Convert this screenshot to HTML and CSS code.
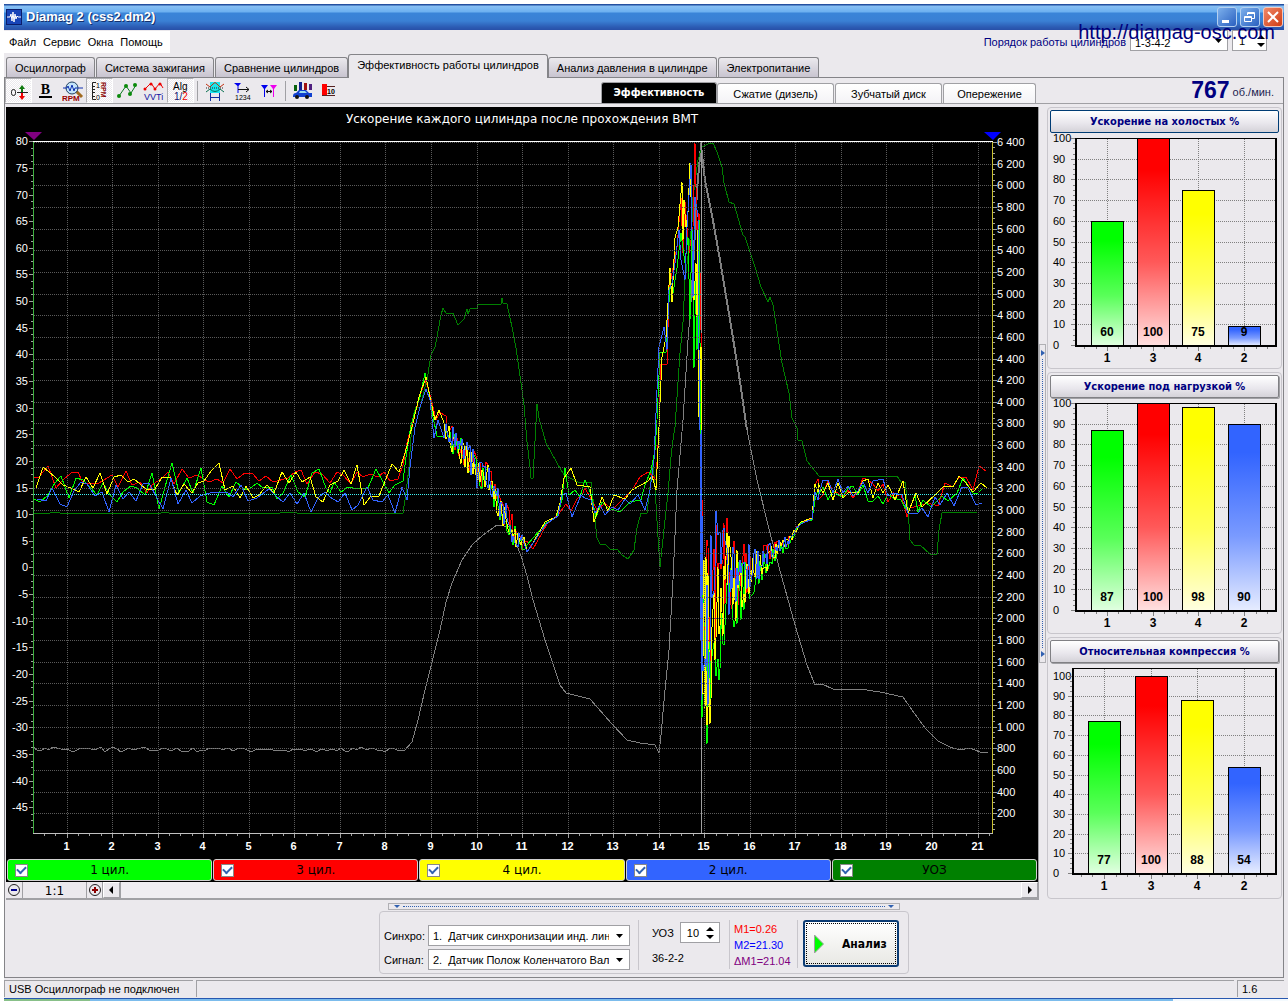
FILE: index.html
```html
<!DOCTYPE html>
<html lang="ru">
<head>
<meta charset="utf-8">
<title>Diamag 2 (css2.dm2)</title>
<link rel="stylesheet" href="styles.css">
</head>
<body>
<div class="window">
  <header class="titlebar">
    <svg class="app-icon" width="16" height="16" viewBox="0 0 16 16"><rect width="16" height="16" fill="#0b1d6b"/><rect x="1" y="1" width="14" height="14" fill="#1845b8"/><path d="M1 8h3l1-3 1 7 1-9 1 10 1-8 1 5 1-3 1 1h3" fill="none" stroke="#fff"/></svg>
    <h1>Diamag 2 (css2.dm2)</h1>
    <div class="window-buttons">
      <button aria-label="Свернуть"><svg width="18" height="18" viewBox="0 0 18 18"><path d="M4 12h7v3H4z" fill="#fff"/></svg></button>
      <button aria-label="Восстановить"><svg width="18" height="18" viewBox="0 0 18 18"><path d="M6.500 7V4.500h7v6H11M6 5.500h8M3.500 8.500h7v5h-7zM3 9.500h8" fill="none" stroke="#fff"/></svg></button>
      <button class="close" aria-label="Закрыть"><svg width="18" height="18" viewBox="0 0 18 18"><path d="M4 4l10 10M14 4L4 14" stroke="#fff" stroke-width="2"/></svg></button>
    </div>
  </header>
  <a class="site-link" href="#site">http://diamag-osc.com</a>

  <div class="menu-row">
    <nav class="menu"><a href="#file">Файл</a><a href="#service">Сервис</a><a href="#windows">Окна</a><a href="#help">Помощь</a></nav>
    <div class="firing-order">
      <label for="order">Порядок работы цилиндров</label>
      <div class="select order"><select id="order"><option>1-3-4-2</option></select><svg width="7" height="4" viewBox="0 0 7 4"><path d="M0 0h7L3.500 4z"/></svg></div>
      <div class="spin small"><input id="first" type="text" value="1" aria-label="Первый цилиндр"><svg width="8" height="12" viewBox="0 0 8 12"><path d="M0 4l4-4 4 4zM0 8l4 4 4-4z"/></svg></div>
    </div>
  </div>

  <div class="tabs">
    <button>Осциллограф</button><button>Система зажигания</button><button>Сравнение цилиндров</button><button class="active">Эффективность работы цилиндров</button><button>Анализ давления в цилиндре</button><button>Электропитание</button>
  </div>

  <main class="page">
    <div class="toolbar">
      <div class="tools">
        <button class="on" aria-label="Ноль"><svg width="20" height="20" viewBox="0 0 20 20"><rect x="2.500" y="8.500" width="4" height="6" rx="2" fill="none" stroke="#222"/><path d="M8 11.500h11" stroke="#222"/><path d="M13 4l3 4h-2v3h-2V8h-2z" fill="#107a10"/><path d="M13 19l3-4h-2v-3h-2v3h-2z" fill="#e00"/></svg></button>
        <button aria-label="Жирный"><b class="glyph-b">B</b></button>
        <button aria-label="Обороты"><svg width="22" height="22" viewBox="0 0 22 22"><path d="M14 11l6 6" stroke="#a06a20" stroke-width="3"/><circle cx="10" cy="8" r="6" fill="#c4e4fa" stroke="#204060"/><path d="M1 8h4l1-2 2 5 2-6 2 6 1-3h8" fill="none" stroke="#1030b0"/><text x="0" y="21" class="t-red">RPM</text></svg></button>
        <button class="on" aria-label="Шкала оборотов"><svg width="20" height="20" viewBox="0 0 20 20"><path d="M6 1.500H2.500v17H6M3 5.500h2M3 8.500h2M3 11.500h2M3 15.500h2" fill="none" stroke="#222"/><text x="6" y="7" class="t-tiny">1</text><text x="6" y="19" class="t-tiny">0</text><text class="t-tiny t-brown" transform="translate(11 1) rotate(90)">RPM</text></svg></button>
        <button aria-label="Точки"><svg width="22" height="20" viewBox="0 0 22 20"><path d="M3 15L10 5l5 7 5-8" fill="none" stroke="#0b7a20"/><g fill="#0a8a0a"><circle cx="3" cy="15" r="2"/><circle cx="10" cy="5" r="2"/><circle cx="14" cy="13" r="2"/><circle cx="19" cy="4" r="2"/></g></svg></button>
        <button aria-label="VVTi"><svg width="22" height="20" viewBox="0 0 22 20"><path d="M2 8l6-6 4 6 5-6 3 5" fill="none" stroke="#e00"/><g fill="#e00"><circle cx="2" cy="8" r="1.500"/><circle cx="8" cy="3" r="1.500"/><circle cx="12" cy="8" r="1.500"/><circle cx="17" cy="3" r="1.500"/></g><text x="1" y="19" class="t-blue">VVTi</text></svg></button>
        <button class="on" aria-label="Алгоритм"><svg width="20" height="22" viewBox="0 0 20 22"><text x="2" y="10" class="t-alg">Alg</text><text x="3" y="20" class="t-half"><tspan fill="#101070">1/</tspan><tspan fill="#e00">2</tspan></text></svg></button>
        <i class="sep"></i>
        <button aria-label="Интервал"><svg width="20" height="20" viewBox="0 0 20 20"><path d="M5 1h10v11H5z" fill="#19e6ee"/><path d="M1 3l4 3 3-3q2-3 4 0l3 3 4-3" fill="none" stroke="#c03010"/><path d="M1 11l4-3q5 5 10 0l4 3" fill="none" stroke="#087050"/><path d="M1 7h18" stroke="#222" stroke-dasharray="1 1"/><path d="M5.500 12v8M14.500 12v8M6 16.500h8" stroke="#1030a0"/></svg></button>
        <button aria-label="Маркер 1234"><svg width="20" height="20" viewBox="0 0 20 20"><path d="M2 2h7L6.500 5v7h-1V5z" fill="#00e"/><path d="M6 8.500h11M14 6l3 2.500L14 11" fill="none" stroke="#111"/><text x="3" y="19" class="t-tiny">1234</text></svg></button>
        <button aria-label="Маркеры"><svg width="20" height="20" viewBox="0 0 20 20"><path d="M2 4h7L6 8v8H5V8z" fill="#00e"/><path d="M11 4h7l-3 4v8h-1V8z" fill="#e0e"/><path d="M7 10.500h6M9 9l-2 1.500L9 12M11 9l2 1.500L11 12" fill="none" stroke="#111"/></svg></button>
        <i class="sep"></i>
        <button aria-label="Отчёт по авто"><svg width="22" height="20" viewBox="0 0 22 20"><path d="M2 4h3v6H2z" fill="#08620e"/><path d="M7 1h3v8H7z" fill="#102090"/><path d="M12 2h3v7h-3z" fill="#a01010"/><path d="M17 3h3v6h-3z" fill="#502080"/><path d="M1 15q0-3 3-3l3-3h7l3 3h3v4H1z" fill="#1040d0"/><path d="M7 12l1-2h5l2 2z" fill="#9de"/><circle cx="5" cy="16" r="2" fill="#111"/><circle cx="15" cy="16" r="2" fill="#111"/></svg></button>
        <button aria-label="Столбцы"><svg width="20" height="20" viewBox="0 0 20 20"><path d="M2 3h5v12H2z" fill="#f00"/><path d="M7 5.500h8M2 14.500h13" stroke="#522"/><text x="7" y="13" class="t-tiny t-bold">10</text></svg></button>
      </div>
      <div class="subtabs">
        <button class="active">Эффективность</button><button>Сжатие (дизель)</button><button>Зубчатый диск</button><button>Опережение</button>
      </div>
      <p class="rpm"><b>767</b> об./мин.</p>
    </div>

    <div class="work">
      <section class="plot">
        <svg id="traces" class="traces" viewBox="6 107 1032 751" role="img" aria-label="Ускорение каждого цилиндра после прохождения ВМТ"></svg>
        <div class="legend">
          <label class="green"><input type="checkbox" checked><span>1 цил.</span></label>
          <label class="red"><input type="checkbox" checked><span>3 цил.</span></label>
          <label class="yellow"><input type="checkbox" checked><span>4 цил.</span></label>
          <label class="blue"><input type="checkbox" checked><span>2 цил.</span></label>
          <label class="dark"><input type="checkbox" checked><span>УОЗ</span></label>
        </div>
        <div class="scroll-row">
          <button aria-label="Уменьшить"><svg width="14" height="14" viewBox="0 0 14 14"><circle cx="7" cy="7" r="5.500" fill="none" stroke="#222"/><path d="M4 7h6" stroke="#00008b" stroke-width="2"/></svg></button>
          <output>1:1</output>
          <button aria-label="Увеличить"><svg width="14" height="14" viewBox="0 0 14 14"><circle cx="7" cy="7" r="5.500" fill="none" stroke="#222"/><path d="M4 7h6M7 4v6" stroke="#8b0000" stroke-width="2"/></svg></button>
          <button class="raised" aria-label="Влево"><svg width="5" height="8" viewBox="0 0 5 8"><path d="M4 0v8L0 4z"/></svg></button>
          <div class="track"></div>
          <button class="raised" aria-label="Вправо"><svg width="5" height="8" viewBox="0 0 5 8"><path d="M1 0v8l4-4z"/></svg></button>
        </div>
      </section>

      <div class="vsplit"><button aria-label="Свернуть панель"><svg width="4" height="6" viewBox="0 0 4 6"><path d="M0 0v6l4-3z"/></svg><i></i><svg width="4" height="6" viewBox="0 0 4 6"><path d="M0 0v6l4-3z"/></svg></button></div>

      <aside class="bars">
        <section class="card"><button class="focused">Ускорение на холостых %</button><svg class="barchart" viewBox="0 0 229 232" data-values="60,100,75,9"></svg></section>
        <section class="card"><button>Ускорение под нагрузкой %</button><svg class="barchart" viewBox="0 0 229 232" data-values="87,100,98,90"></svg></section>
        <section class="card"><button>Относительная компрессия %</button><svg class="barchart" viewBox="0 0 229 232" data-values="77,100,88,54" data-headroom="8"></svg></section>
      </aside>
    </div>

    <div class="bottom">
      <div class="hsplit"><svg width="6" height="3" viewBox="0 0 6 3"><path d="M0 0h6L3 3z"/></svg><i></i><svg width="6" height="3" viewBox="0 0 6 3"><path d="M0 0h6L3 3z"/></svg></div>
      <form class="controls">
        <div class="sources">
          <label for="sync">Синхро:</label>
          <div class="select"><select id="sync"><option>1.&nbsp; Датчик синхронизации инд. линейный</option></select><svg width="7" height="4" viewBox="0 0 7 4"><path d="M0 0h7L3.500 4z"/></svg></div>
          <label for="signal">Сигнал:</label>
          <div class="select"><select id="signal"><option>2.&nbsp; Датчик Полож Коленчатого Вала</option></select><svg width="7" height="4" viewBox="0 0 7 4"><path d="M0 0h7L3.500 4z"/></svg></div>
        </div>
        <div class="advance">
          <div class="advance-row"><label for="uoz">УОЗ</label><div class="spin"><input id="uoz" type="text" value="10"><svg width="8" height="12" viewBox="0 0 8 12"><path d="M0 4l4-4 4 4zM0 8l4 4 4-4z"/></svg></div></div>
          <span>36-2-2</span>
        </div>
        <div class="marks"><span class="m1">M1=0.26</span><span class="m2">M2=21.30</span><span class="dm">ΔM1=21.04</span></div>
        <button type="button" class="analyse"><svg width="10" height="20" viewBox="0 0 10 20"><path d="M.500 1v18l9-9z" fill="#0f0" stroke="#a0a0a0"/></svg><span>Анализ</span></button>
      </form>
    </div>
  </main>

  <footer class="status"><span class="device">USB Осциллограф не подключен</span><span class="message"></span><span class="version">1.6</span></footer>
</div>
<div class="taskbar"><i></i></div>
<script src="charts.js"></script>
</body>
</html>
```
FILE: styles.css
```css
* { box-sizing: border-box; }
body { margin: 0; padding: 4px 0 0 4px; background: #fff; font: 11px/14px "Liberation Sans", Arial, sans-serif; color: #000; }
button, input, select { font: inherit; color: inherit; margin: 0; padding: 0; border: 0; background: none; border-radius: 0; }
a { color: inherit; text-decoration: none; }
h1, p { margin: 0; }
svg { display: block; flex: none; }
.window { position: relative; background: #ebe9ed; }
.titlebar { display: flex; align-items: center; height: 26px; padding: 0 1px 0 2px; gap: 4px; background: linear-gradient(#2450a0 0 1px, #88c0f4 2px, #6cb0f0 8px, #3a84d8 9px, #3a80d4 17px, #2c5cb4 23px, #2850a8); margin-right: 4px; }
.titlebar h1 { flex: 1; font: bold 13px/16px "Liberation Sans", sans-serif; color: #fff; text-shadow: 1px 1px #14306c; }
.window-buttons { display: flex; gap: 3px; }
.window-buttons button { display: grid; place-items: center; width: 20px; height: 20px; border: 1px solid #b4d0f0; border-radius: 3px; background: linear-gradient(135deg, #7cb0ec, #2a60c0); }
.window-buttons .close { background: linear-gradient(135deg, #f08868, #d03c14); border-color: #f4c8bc; }
.site-link { position: absolute; right: 13px; top: 17px; z-index: 2; font: 20px/22px "Liberation Sans", sans-serif; color: #00007c; }
.menu-row { display: flex; justify-content: space-between; height: 24px; }
.menu { display: flex; gap: 7px; align-items: center; width: 166px; height: 22px; margin-top: 1px; padding-left: 5px; background: #fff; }
.firing-order { display: flex; gap: 4px; color: #000080; line-height: 24px; padding-right: 21px; }
.select { position: relative; display: flex; align-items: center; width: 202px; height: 21px; border: 1px solid #a0a0a4; background: #fff; }
.select select { width: 180px; height: 19px; padding-left: 4px; appearance: none; outline: 0; overflow: hidden; color: #000; }
.select svg { margin-left: 7px; }
.order { width: 98px; }
.order select { width: 78px; }
.order svg { margin-left: 6px; }
.spin { display: flex; align-items: center; justify-content: space-between; width: 40px; height: 21px; padding-right: 5px; border: 1px solid #a0a0a4; background: #fff; color: #000; }
.spin input { width: 24px; padding-left: 6px; }
.spin.small { width: 35px; }
.tabs { display: flex; align-items: flex-end; height: 23px; padding-left: 2px; }
.tabs button { height: 20px; padding: 0 8px; margin-right: 1px; border: 1px solid #848488; border-bottom: 0; border-radius: 3px 3px 0 0; background: linear-gradient(#ebe9ed, #c8c4d0); white-space: nowrap; }
.tabs .active { position: relative; z-index: 1; height: 24px; margin: 0 0 -1px -1px; padding-bottom: 3px; background: #ebe9ed; }
.page { margin-right: 4px; border: 1px solid #848488; }
.toolbar { display: flex; height: 26px; border-bottom: 1px solid #a0a0a4; }
.tools { display: flex; flex: 1; }
.tools button { display: grid; place-items: center; width: 27px; height: 25px; }
.tools .on { background: repeating-conic-gradient(#fff 0 25%, #ebe9ed 0 50%) 0 0 / 2px 2px; border: 1px solid; border-color: #b0b0b4 #fff #fff #b0b0b4; }
.sep { width: 1px; margin: 3px 3px 2px; background: #a0a0a4; }
.glyph-b { font: bold 14px/13px "Liberation Serif", serif; border-bottom: 2px solid; width: 13px; }
.tools text { font-family: "Liberation Sans", sans-serif; }
.t-red { font-size: 8px; font-weight: bold; fill: #900; }
.t-tiny { font-size: 7px; }
.t-brown { fill: #800; font-weight: bold; }
.t-bold { font-weight: bold; }
.t-blue { font-size: 9px; fill: #1010a0; }
.t-alg { font-size: 10px; }
.t-half { font-size: 10px; }
.subtabs { display: flex; align-items: flex-end; }
.subtabs button { width: 107px; height: 20px; margin-left: 1px; border: 1px solid #a0a0a4; border-bottom: 0; border-radius: 3px 3px 0 0; background: linear-gradient(#fff, #f4f3f6); }
.subtabs button:nth-child(2) { width: 117px; margin-left: 0; }
.subtabs .active { width: 116px; height: 21px; background: #000; color: #fff; font-weight: bold; font-family: "DejaVu Sans Condensed", sans-serif; }
.subtabs button:last-child { width: 93px; }
.rpm { width: 247px; padding-right: 9px; text-align: right; color: #1c1c50; line-height: 26px; }
.rpm b { font: bold 23px/24px "Liberation Sans", sans-serif; color: #000080; vertical-align: -2px; }
.work { display: flex; padding: 3px 0 0 1px; }
.plot { flex: 1; min-width: 0; background: #000; border-right: 1px solid #a0a0a4; }
.traces { width: 100%; height: auto; }
.traces text, .barchart text { font-family: "Liberation Sans", sans-serif; font-size: 11px; }
.traces text { fill: #fff; }
.traces .title { font: 12px "DejaVu Sans", sans-serif; }
.traces .x, .barchart .x { font-weight: bold; }
.barchart .x { font-size: 12px; }
.barchart .v { font-size: 12px; font-weight: bold; }
.grid { fill: none; stroke: #5a5a5a; stroke-dasharray: 1 1; shape-rendering: crispEdges; }
.crisp { shape-rendering: crispEdges; fill: none; }
.trace { fill: none; stroke-width: 1; shape-rendering: crispEdges; }
.trace.wide { stroke-width: 2; }
.legend { display: flex; gap: 1px; padding: 1px; }
.legend label { flex: 1; display: flex; align-items: center; height: 22px; padding-left: 7px; border: 1px solid #d0d0d0; border-radius: 3px; font: 12px/20px "DejaVu Sans", sans-serif; }
.legend span { flex: 1; text-align: center; padding-right: 20px; }
.legend input { appearance: none; width: 13px; height: 13px; border: 1px solid #888; background: #fff; display: grid; place-items: center; }
.legend input:checked::before { content: ""; width: 7px; height: 4px; border: solid #3060b0; border-width: 0 0 2px 2px; transform: translateY(-1px) rotate(-45deg); }
.green { background: #0f0; }
.red { background: #f00; }
.yellow { background: #ff0; }
.blue { background: #3264ff; }
.dark { background: #008000; }
.scroll-row { display: flex; height: 18px; background: #ebe9ed; border-bottom: 2px solid #a0a0a4; }
.scroll-row button { display: grid; place-items: center; width: 17px; border-right: 1px solid #a0a0a4; }
.scroll-row output { width: 63px; text-align: center; font: 12px/19px "DejaVu Sans", sans-serif; }
.scroll-row button:nth-of-type(2) { border-left: 1px solid #a0a0a4; }
.scroll-row .raised { border: 1px solid; border-color: #fff #a0a0a4 #a0a0a4 #fff; }
.track { flex: 1; border-left: 1px solid #a0a0a4; background: #efedf1; }
.vsplit { display: flex; align-items: center; width: 8px; }
.vsplit button { display: flex; flex-direction: column; align-items: center; gap: 3px; width: 7px; height: 319px; padding: 5px 0; border: 1px solid #b0b0b4; }
.vsplit i { flex: 1; border-left: 1px dotted #3060b0; }
.vsplit svg, .hsplit svg { fill: #3060b0; }
.bars { display: flex; flex-direction: column; gap: 3px; width: 236px; padding: 0 1px 0 0; }
.card { height: 262px; padding: 2px; border: 1px solid #c8c6cc; border-radius: 4px; }
.card button { display: block; width: 100%; height: 23px; border: 1px solid #808084; border-radius: 2px; background: linear-gradient(#fff, #e8e6ec 60%, #d4d2d8); color: #000080; font-weight: bold; font-family: "DejaVu Sans Condensed", sans-serif; box-shadow: 1px 1px #a0a0a4; }
.card .focused { border-color: #003c74; box-shadow: none; }
.barchart { width: 100%; height: auto; margin-top: 1px; overflow: visible; }
.bottom { display: flex; flex-direction: column; align-items: center; gap: 1px; height: 77px; padding-top: 3px; }
.hsplit { display: flex; align-items: center; gap: 3px; width: 512px; height: 7px; padding: 0 5px; border: 1px solid #b0b0b4; }
.hsplit i { flex: 1; border-top: 1px dotted #3060b0; }
.controls { display: flex; align-items: flex-start; width: 530px; height: 63px; padding: 8px 0 0 4px; border: 1px solid #c8c6cc; border-radius: 4px; }
.sources { display: grid; grid-template-columns: 44px 202px; gap: 3px 0; align-items: center; padding: 5px 8px 0 0; border-right: 1px solid #c8c6cc; }
.advance { display: flex; flex-direction: column; gap: 8px; width: 91px; height: 49px; padding: 2px 0 0 13px; border-right: 1px solid #c8c6cc; }
.advance-row { display: flex; align-items: center; gap: 6px; }
.marks { display: flex; flex-direction: column; gap: 2px; width: 68px; height: 48px; margin-right: 5px; padding: 2px 0 0 4px; border-right: 1px solid #c8c6cc; white-space: nowrap; }
.m1 { color: #f00; }
.m2 { color: #00f; }
.dm { color: #800080; }
.analyse { display: flex; align-items: center; width: 96px; height: 47px; padding: 0 9px; gap: 18px; border: 2px solid #0c3c74; border-radius: 3px; background: linear-gradient(#fff, #e8e8e4); font: bold 12px/14px "DejaVu Sans Condensed", sans-serif; outline: 1px dotted #000; outline-offset: -4px; }
.status { display: flex; gap: 3px; height: 20px; padding-top: 2px; margin-right: 4px; }
.status span { height: 17px; padding-left: 4px; border: solid #a0a0a4; border-width: 1px 0 0 1px; line-height: 16px; }
.device { width: 189px; }
.message { flex: 1; }
.version { width: 47px; }
.taskbar { height: 3px; border-top: 1px solid #2858b0; background: linear-gradient(90deg, #7cbcec 1169px, #f4fafe 1169px); }
.taskbar i { display: block; width: 86px; height: 2px; background: #88c088; }
```
FILE: charts.js
```js
const NS = 'http://www.w3.org/2000/svg';

function add(parent, tag, attrs, text) {
  const el = document.createElementNS(NS, tag);
  for (const k in attrs) el.setAttribute(k, attrs[k]);
  if (text !== undefined) el.textContent = text;
  parent.appendChild(el);
  return el;
}

// Small repeatable generator so that the noisy parts look the same on every load.
function noise(seed) {
  let s = seed;
  return () => (s = (s * 16807) % 2147483647) / 2147483647;
}

function interpolate(table, x) {
  for (let i = 1; i < table.length; i++) {
    if (x <= table[i][0]) {
      const a = table[i - 1], b = table[i], t = (x - a[0]) / (b[0] - a[0]);
      return a.map((v, k) => v + (b[k] - v) * t);
    }
  }
  return table[table.length - 1];
}

// Fills a stretch with points between an upper and a lower bound.
function burst(bounds, step, bias, seed) {
  const r = noise(seed * 7919), out = [];
  const end = bounds[bounds.length - 1][0];
  r();
  for (let x = bounds[0][0] + (seed % 3); x < end; x += step) {
    const [, top, low] = interpolate(bounds, x);
    const t = Math.min(1, Math.max(0, r() + bias));
    out.push(Math.round(x) + ',' + Math.round(top + (low - top) * t));
  }
  return out.join(' ');
}

const decay = [[442, 410, 436], [450, 424, 450], [460, 434, 464], [470, 445, 475], [478, 456, 492], [488, 464, 490], [494, 480, 508], [499, 490, 526], [506, 503, 528], [512, 515, 545], [518, 528, 550], [524, 537, 556], [528, 544, 552]];
const ringing = [[702, 500, 700], [704, 520, 720], [707, 540, 735], [712, 530, 715], [717, 508, 695], [722, 526, 655], [727, 518, 632], [733, 540, 628], [741, 545, 620], [748, 543, 602], [754, 550, 592], [762, 546, 580], [770, 543, 566], [780, 540, 556], [790, 535, 546], [797, 526, 530]];
const settled = [[816, 478, 503], [830, 480, 500], [860, 478, 500], [880, 478, 508], [894, 482, 504]];

const series = [
  { color: '#ff0000', seed: 11, bias: -0.15,
    a: '34,478 39,477 48,466 56,488 63,480 71,473 78,472 83,483 99,483 112,475 118,487 126,471 132,485 140,482 147,493 152,485 162,478 168,472 174,484 182,469 189,478 197,475 209,482 217,479 223,483 230,469 237,479 245,473 252,473 259,481 266,476 273,482 288,478 295,472 301,470 307,484 315,472 322,474 330,483 337,472 343,475 351,484 357,472 363,477 370,474 378,477 384,472 390,481 398,479 403,465 407,443 413,420 419,400 425,380 428,388 432,402 436,420 440,412',
    b: '533,549 547,524 558,515 566,504 571,511 577,499 582,495 585,488 590,497 597,510 605,503 612,510 622,500 632,490 640,477 648,472 652,475 656,480 659,427 661,364 667,364 669,290 672,273 677,247 681,198 683,253 685,202 687,228 689,253 693,227 695,143 697,230 699,213 701,330 702,500',
    c: '797,528 801,523 812,519 815,485 818,479',
    d: '893,498 901,494 907,517 910,508 922,505 928,503 938,506 945,483 953,487 959,477 966,477 973,490 979,466 986,471' },
  { color: '#00ff00', seed: 29, bias: 0.2,
    a: '34,499 40,502 47,496 55,483 61,476 69,498 76,478 83,480 90,487 97,495 103,483 110,495 117,502 123,492 131,486 137,488 145,495 152,473 159,509 165,487 172,463 179,493 187,478 193,493 201,468 207,502 214,505 222,486 229,497 236,482 243,488 248,490 257,483 263,488 272,487 277,499 283,493 291,475 298,492 305,497 312,473 319,469 326,488 330,493 334,482 341,492 348,487 358,489 368,488 376,469 389,493 395,485 403,481 406,457 411,425 415,412 420,397 425,373 428,387 433,417 437,436',
    b: '546,523 557,517 562,500 565,468 569,495 575,490 580,497 585,480 591,494 596,517 602,502 608,508 620,512 630,502 641,500 645,485 651,470 655,450 657,420 660,353 666,352 668,317 670,287 673,293 677,268 681,233 685,263 688,237 690,320 692,227 694,368 696,263 697,350 699,220 700,343 702,718 703,600 705,660 707,744 709,640',
    c: '797,529 801,523 812,520 815,500 818,489',
    d: '901,500 908,513 915,495 918,512 923,500 931,507 942,496 948,501 957,493 963,478 973,493 978,493 983,488' },
  { color: '#ffff00', seed: 53, bias: 0.05,
    a: '36,488 43,467 55,477 63,485 71,488 79,492 86,477 93,488 100,473 107,494 114,477 121,475 128,482 134,479 147,490 155,489 162,477 170,477 177,495 184,484 192,493 198,483 204,481 211,471 219,463 225,490 233,486 240,498 246,486 253,498 259,495 267,485 274,493 282,472 289,483 296,472 302,482 310,477 316,497 323,502 330,485 338,481 344,470 351,484 357,465 364,505 371,496 379,496 392,464 399,472 405,453 413,423 419,397 426,377 430,397 435,420 439,410',
    b: '530,548 545,522 556,517 560,503 564,478 571,468 577,485 590,487 594,522 602,497 608,511 614,495 625,499 632,490 648,481 652,476 656,490 659,427 662,357 666,337 668,303 670,268 672,302 675,238 678,227 682,182 683,240 684,200 686,227 688,213 690,163 692,230 694,300 696,263 697,317 698,230 699,417 701,347 702,640 704,560 707,725 709,690',
    c: '797,527 801,522 812,518 815,484 818,492',
    d: '895,500 903,481 908,513 916,493 922,507 937,493 944,486 953,487 959,476 965,482 973,492 981,483 987,488' },
  { color: '#3264ff', seed: 71, bias: -0.1,
    a: '37,499 46,501 52,488 60,504 67,507 74,491 81,482 87,484 95,496 102,492 109,512 116,485 123,499 129,492 136,501 143,484 149,483 157,498 163,509 171,478 178,504 186,490 192,503 200,496 213,492 227,492 233,497 241,485 248,501 257,498 269,489 276,496 283,502 290,493 297,504 304,493 311,512 318,498 325,492 330,497 338,502 345,493 352,510 358,505 367,487 373,500 382,502 388,495 395,513 402,487 407,500 410,467 415,427 420,407 426,389 430,400 434,438 438,420',
    b: '546,524 558,516 562,495 566,493 572,517 577,505 581,495 585,498 591,500 595,513 600,505 605,515 612,507 618,510 625,499 630,504 638,495 645,510 650,490 654,460 657,390 659,347 664,327 667,350 669,290 672,283 675,263 679,230 681,260 685,280 687,227 691,163 693,297 695,197 698,217 699,350 700,430 701,640 702,515 703,550',
    c: '797,528 801,524 812,519 815,492 818,500',
    d: '902,495 908,513 918,513 922,508 928,517 935,497 940,505 947,493 954,506 962,487 968,488 976,505 982,503' }
];

const advance = '33,513 50,513 52,512 58,512 60,513 161,513 163,512 169,513 280,513 282,512 295,512 297,513 403,513 406,493 409,467 411,437 414,413 416,407 420,408 425,387 427,380 431,355 435,347 437,337 441,315 443,308 446,313 453,313 458,325 464,319 467,309 468,314 470,309 477,308 478,304 501,304 502,298 503,303 507,304 512,327 516,348 521,383 524,405 527,442 530,467 531,478 533,478 537,404 539,418 546,443 557,463 564,475 578,482 591,482 592,488 595,520 597,538 600,544 605,544 610,549 617,549 622,555 628,559 634,550 637,528 641,513 647,513 653,462 655,487 658,537 660,567 665,520 668,493 671,457 673,440 675,427 680,353 683,322 685,280 692,223 693,197 698,160 702,147 710,143 713,143 717,152 722,167 724,183 729,202 734,204 743,235 745,237 750,252 755,267 761,287 768,302 770,297 773,305 778,337 782,363 789,393 792,418 797,428 798,440 802,441 807,461 819,476 897,476 901,482 905,482 908,507 910,540 914,545 920,545 930,554 937,554 939,530 942,513 965,512 977,513';
const rpm = ' 412,742 418,720 425,690 432,662 440,630 446,602 452,583 462,560 472,545 483,535 497,525 510,527 521,556 527,576 533,600 545,640 560,685 566,693 590,699 612,724 627,740 640,743 655,745 659,753 661,735 665,690 669,650 673,580 677,490 683,420 688,340 692,290 697,190 701,143 705,180 712,215 720,260 730,320 739,375 747,430 757,480 770,533 782,578 795,625 807,665 815,685 822,684 833,689 860,689 880,692 903,697 912,710 925,728 938,741 950,747 960,750 970,748 980,752 988,752';

function drawTraces(svg) {
  const px = n => Math.round(21 + 45.55 * n) + 0.5;
  const left = v => Math.round(141.3 + 5.327 * (80 - v));
  const right = v => Math.round(142 + (6400 - v) / 200 * 21.65);
  add(svg, 'text', { x: 522, y: 123, 'text-anchor': 'middle', class: 'title' }, 'Ускорение каждого цилиндра после прохождения ВМТ');

  let grid = '', ticks = '', rticks = '', xticks = '';
  for (let v = 200; v <= 6400; v += 200) {
    grid += `M34 ${right(v) + 0.5}H992`;
    add(svg, 'text', { x: 997, y: right(v) + 4 }, v < 1000 ? v : `${Math.floor(v / 1000)} ${String(v % 1000).padStart(3, '0')}`);
  }
  for (let v = 50; v <= 6400; v += 50) rticks += `M993 ${right(v) + 0.5}h${v % 200 ? 2 : 4}`;
  for (let v = -48.75; v <= 80; v += 1.25) ticks += `M33 ${left(v) + 0.5}h${v % 5 ? -2 : -4}`;
  for (let v = -45; v <= 80; v += 5) add(svg, 'text', { x: 28, y: left(v) + 4, 'text-anchor': 'end' }, v);
  for (let n = 1; n <= 21; n++) {
    grid += `M${px(n)} 142V833`;
    add(svg, 'text', { x: px(n) - 1, y: 850, 'text-anchor': 'middle', class: 'x' }, n);
  }
  for (let n = 0.5; n <= 21.25; n += 0.25) xticks += `M${px(n)} 834v${n % 1 ? 2 : 4}`;
  add(svg, 'path', { d: ticks + rticks + xticks, class: 'crisp', stroke: '#a0a0a0' });

  const r = noise(5);
  let idle = '';
  for (let x = 33; x < 409; x += 4) idle += `${x},${Math.round(747 + r() * 5)} `;
  add(svg, 'polyline', { points: idle + rpm, class: 'trace', stroke: '#808080' });
  add(svg, 'polyline', { points: '692,290 697,190 701,146 705,180 712,215 720,260 730,320 739,375 747,430', class: 'trace wide', stroke: '#808080' });
  add(svg, 'polyline', { points: advance, class: 'trace', stroke: '#008000' });
  add(svg, 'path', { d: 'M701.5 142V833', class: 'crisp', stroke: '#a0a0a0' });
  for (const s of series) {
    const points = [s.a, burst(decay, 1.5, s.bias / 2, s.seed), s.b, burst(ringing, 1.3, s.bias, s.seed + 4), s.c, burst(settled, 5, s.bias / 2, s.seed + 9), s.d].join(' ');
    add(svg, 'polyline', { points, class: 'trace', stroke: s.color });
  }
  add(svg, 'path', { d: grid, class: 'grid' });
  add(svg, 'path', { d: 'M34 494.5H992', class: 'crisp', stroke: '#40f0f0', 'stroke-dasharray': '1 1' });
  add(svg, 'path', { d: 'M701.5 430V700', class: 'crisp', stroke: '#3264ff' });
  add(svg, 'path', { d: 'M33 141.5H993', class: 'crisp', stroke: '#fff' });
  add(svg, 'path', { d: 'M33 833.5H993', class: 'crisp', stroke: '#c0c0c0' });
  add(svg, 'path', { d: 'M33.5 142V833', class: 'crisp', stroke: '#40b040' });
  add(svg, 'path', { d: 'M992.5 142V833', class: 'crisp', stroke: '#c8c030' });
  add(svg, 'path', { d: 'M25 132h17l-8 8z', fill: '#800080' });
  add(svg, 'path', { d: 'M984 132h17l-8 8z', fill: '#0000ff' });
}

function drawBars(svg, index) {
  const values = svg.dataset.values.split(',').map(Number);
  const headroom = Number(svg.dataset.headroom || 0);
  const colors = ['#00ff00', '#ff0000', '#ffff00', '#3264ff'];
  const x0 = headroom ? 22 : 25, base = headroom ? 209 : 211, top = 4 + headroom;
  const step = headroom ? 46.7 : 45.7, first = headroom ? 54 : 57;
  const y = v => Math.round(base - (base - top) * v / 100);
  const cx = i => Math.round(first + step * i);
  let grid = '', ticks = '';
  for (let v = 0; v <= 100; v += 10) {
    if (v) grid += `M${x0 + 1} ${y(v) + 0.5}H225`;
    add(svg, 'text', { x: 3, y: y(v) + 4 }, v);
  }
  for (let v = 0; v <= 100; v += 2.5) ticks += `M${x0} ${y(v) + 0.5}h${v % 10 ? -2 : -4}`;
  for (let n = -0.5; n <= 3.5; n += 0.25) ticks += `M${cx(n) + 0.5} ${base + 1}v${n % 1 ? 3 : 5}`;
  for (let i = 0; i < 4; i++) grid += `M${cx(i) + 0.5} 5V${base}`;
  add(svg, 'path', { d: ticks, class: 'crisp', stroke: '#808080' });
  add(svg, 'path', { d: grid, class: 'crisp', stroke: '#808080', 'stroke-dasharray': '1 1' });
  const defs = add(svg, 'defs', {});
  values.forEach((v, i) => {
    const id = `fill${index}${i}`;
    const g = add(defs, 'linearGradient', { id, x1: 0, y1: 0, x2: 0, y2: 1 });
    for (const [offset, opacity] of [[0, 1], [0.15, 1], [0.6, 0.65], [1, 0.12]]) {
      add(g, 'stop', { offset, 'stop-color': colors[i], 'stop-opacity': opacity });
    }
    const box = { x: cx(i) - 15.5, y: y(v) + 0.5, width: 32, height: base - y(v) };
    add(svg, 'rect', { ...box, fill: '#fff' });
    add(svg, 'rect', { ...box, fill: `url(#${id})`, class: 'bar', stroke: '#000' });
    add(svg, 'text', { x: cx(i), y: base - 9, 'text-anchor': 'middle', class: 'v' }, v);
    add(svg, 'text', { x: cx(i), y: base + 17, 'text-anchor': 'middle', class: 'x' }, [1, 3, 4, 2][i]);
  });
  add(svg, 'path', { d: `M${x0} 4.5H226`, class: 'crisp', stroke: '#000' });
  add(svg, 'path', { d: `M${x0 + 1} 4V${base + 1}H226V4`, class: 'crisp', stroke: '#000', 'stroke-width': 2 });
}

drawTraces(document.getElementById('traces'));
document.querySelectorAll('.barchart').forEach(drawBars);
```
